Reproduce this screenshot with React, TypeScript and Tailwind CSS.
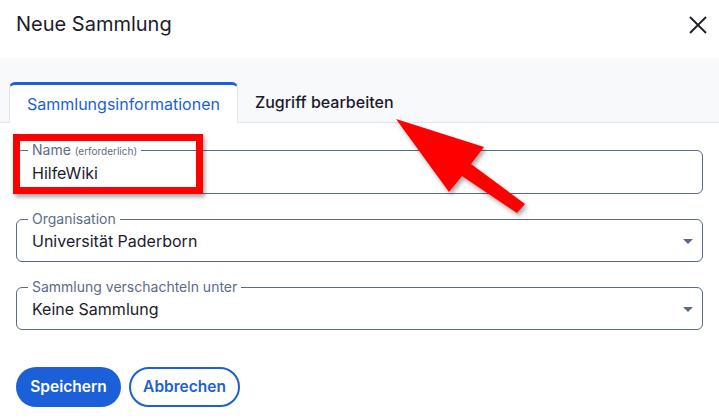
import React from 'react';

const fieldBox = 'rounded-md border border-[#5b6a8a] px-[11px] pb-2 m-0 min-w-0';
const legendCls = 'px-1 text-[14px] leading-[14px] text-[#5d6b86]';

const Caret = () => (
  <svg width="10" height="5" viewBox="0 0 10 5" className="shrink-0 -mr-[2px]">
    <path d="M0 0 H10 L5 5 Z" fill="#5b6a8a" />
  </svg>
);

const SelectField = ({ label, value }: { label: string; value: string }) => (
  <fieldset className={fieldBox}>
    <legend className={legendCls}>{label}</legend>
    <div className="flex items-center justify-between pt-[3px] pl-1">
      <span className="text-[16px] leading-6 text-[#1b1b2b]">{value}</span>
      <Caret />
    </div>
  </fieldset>
);

export default function App() {
  return (
    <div className="relative w-[719px] h-[420px] bg-white overflow-hidden" style={{ fontFamily: 'Inter, "Noto Sans", sans-serif' }}>
      {/* Header */}
      <div className="flex items-start justify-between h-[58px] pl-4 pr-3 pt-[10px]">
        <h2 className="text-[20px] leading-7 font-normal text-[#1b1b2b]">Neue Sammlung</h2>
        <button className="mt-[6px]">
          <svg width="18" height="18" viewBox="0 0 18 18">
            <path d="M1 1 L17 17 M17 1 L1 17" stroke="#1b1b2b" strokeWidth="1.8" />
          </svg>
        </button>
      </div>

      {/* Tabs */}
      <div className="bg-[#f8f9fb] pt-[23px] pl-[9px] flex items-end border-b border-[#e3e6ea]">
        <div className="-mb-px h-[41px] flex items-center px-[17px] bg-white rounded-t-md border-t-[3px] border-t-[#1b5fd9] border-x border-x-[#e3e6ea] text-[16px] text-[#1b5fd9]">
          Sammlungsinformationen
        </div>
        <div className="h-[41px] flex items-center px-[17px] text-[16px] font-medium text-[#1b1b2b]">
          Zugriff bearbeiten
        </div>
      </div>

      {/* Form */}
      <div className="px-4 pt-[20px] flex flex-col gap-[18px]">
        <fieldset className={fieldBox}>
          <legend className={legendCls}>
            Name <span className="text-[10px]">(erforderlich)</span>
          </legend>
          <div className="pt-[3px] pl-1 text-[16px] leading-6 text-[#1b1b2b]">HilfeWiki</div>
        </fieldset>
        <SelectField label="Organisation" value="Universität Paderborn" />
        <SelectField label="Sammlung verschachteln unter" value="Keine Sammlung" />
      </div>

      <div className="px-4 pt-[37px] flex gap-2">
        <button className="h-10 w-[105px] rounded-full bg-[#1b5fd9] text-white text-[15.5px] font-semibold">Speichern</button>
        <button className="h-10 w-[111px] rounded-full border-2 border-[#1b5fd9] text-[#1b5fd9] text-[15.5px] font-semibold">Abbrechen</button>
      </div>

      {/* Annotation: red box */}
      <div className="absolute left-[13px] top-[134px] w-[190px] h-[60px] border-[7px] border-[#ff0000] shadow-[2px_3px_4px_rgba(0,0,0,0.35)]" />

      {/* Annotation: red arrow */}
      <svg className="absolute left-0 top-0 pointer-events-none" width="719" height="420" style={{ filter: 'drop-shadow(2px 3px 2px rgba(0,0,0,0.35))' }}>
        <polygon points="396,119 484,147 471,164 525,204 517,213 462,176 449,192" fill="#ff0000" />
      </svg>
    </div>
  );
}
